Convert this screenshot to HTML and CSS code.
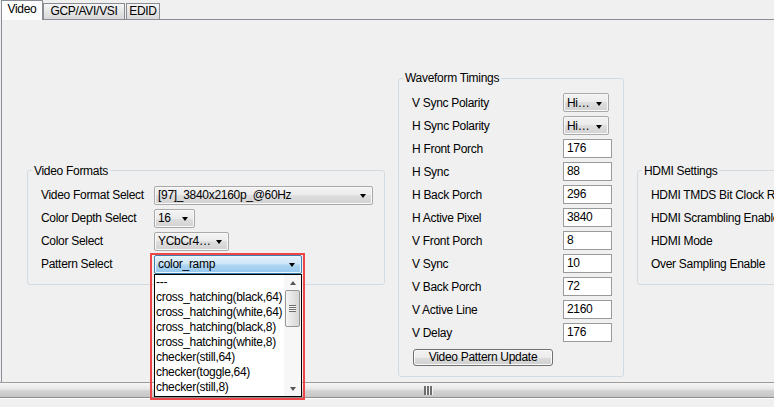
FILE: index.html
```html
<!DOCTYPE html>
<html>
<head>
<meta charset="utf-8">
<link rel="stylesheet" href="styles.css">
</head>
<body>
<div class="tabs">
  <div class="tab tab-video active">Video</div>
  <div class="tab tab-gcp">GCP/AVI/VSI</div>
  <div class="tab tab-edid">EDID</div>
</div>
<div class="panel">
  <div class="groups">
    <fieldset class="group group-formats">
      <legend>Video Formats</legend>
      <div class="row">
        <span class="label label-vf">Video Format Select</span>
        <div class="combo w-format"><span class="combo-text">[97]_3840x2160p_@60Hz</span><span class="arrow"></span></div>
      </div>
      <div class="row">
        <span class="label label-vf">Color Depth Select</span>
        <div class="combo w-depth"><span class="combo-text">16</span><span class="arrow"></span></div>
      </div>
      <div class="row">
        <span class="label label-vf">Color Select</span>
        <div class="combo w-color"><span class="combo-text">YCbCr4…</span><span class="arrow"></span></div>
      </div>
      <div class="row">
        <span class="label label-vf">Pattern Select</span>
        <div class="combo-wrap">
          <div class="combo open w-pattern"><span class="combo-text">color_ramp</span><span class="arrow"></span></div>
          <div class="listbox">
            <ul class="items">
              <li>---</li>
              <li>cross_hatching(black,64)</li>
              <li>cross_hatching(white,64)</li>
              <li>cross_hatching(black,8)</li>
              <li>cross_hatching(white,8)</li>
              <li>checker(still,64)</li>
              <li>checker(toggle,64)</li>
              <li>checker(still,8)</li>
            </ul>
            <div class="vscroll">
              <span class="up"></span>
              <span class="thumb"><span class="grip-v"></span></span>
              <span class="down"></span>
            </div>
          </div>
          <div class="highlight"></div>
        </div>
      </div>
    </fieldset>

    <fieldset class="group group-timings">
      <legend>Waveform Timings</legend>
      <div class="row"><span class="label label-wf">V Sync Polarity</span><div class="combo w-pol"><span class="combo-text">Hi…</span><span class="arrow"></span></div></div>
      <div class="row"><span class="label label-wf">H Sync Polarity</span><div class="combo w-pol"><span class="combo-text">Hi…</span><span class="arrow"></span></div></div>
      <div class="row"><span class="label label-wf">H Front Porch</span><div class="field">176</div></div>
      <div class="row"><span class="label label-wf">H Sync</span><div class="field">88</div></div>
      <div class="row"><span class="label label-wf">H Back Porch</span><div class="field">296</div></div>
      <div class="row"><span class="label label-wf">H Active Pixel</span><div class="field">3840</div></div>
      <div class="row"><span class="label label-wf">V Front Porch</span><div class="field">8</div></div>
      <div class="row"><span class="label label-wf">V Sync</span><div class="field">10</div></div>
      <div class="row"><span class="label label-wf">V Back Porch</span><div class="field">72</div></div>
      <div class="row"><span class="label label-wf">V Active Line</span><div class="field">2160</div></div>
      <div class="row"><span class="label label-wf">V Delay</span><div class="field">176</div></div>
      <div class="button">Video Pattern Update</div>
    </fieldset>

    <fieldset class="group group-hdmi">
      <legend>HDMI Settings</legend>
      <div class="row"><span class="label">HDMI TMDS Bit Clock Ratio</span></div>
      <div class="row"><span class="label">HDMI Scrambling Enable</span></div>
      <div class="row"><span class="label">HDMI Mode</span></div>
      <div class="row"><span class="label">Over Sampling Enable</span></div>
    </fieldset>
  </div>
</div>
<div class="hscroll">
  <svg class="grip-h" width="9" height="9" viewBox="0 0 9 9">
    <rect x="0" y="0" width="2" height="9" fill="#6e6e6e"/>
    <rect x="3" y="0" width="2" height="9" fill="#6e6e6e"/>
    <rect x="6" y="0" width="2" height="9" fill="#6e6e6e"/>
    <rect x="2" y="0" width="1" height="9" fill="#f4f4f4"/>
    <rect x="5" y="0" width="1" height="9" fill="#f4f4f4"/>
    <rect x="8" y="0" width="1" height="9" fill="#f4f4f4"/>
  </svg>
</div>
<div class="footer"></div>
</body>
</html>
```
FILE: styles.css
```css
* { box-sizing: border-box; }

html, body {
  margin: 0;
  padding: 0;
}

body {
  width: 774px;
  height: 407px;
  overflow: hidden;
  background: #f0f0f0;
  font-family: "Liberation Sans", Arial, sans-serif;
  font-size: 12px;
  letter-spacing: -0.3px;
  color: #000;
}

/* ---------- tabs ---------- */
.tabs {
  display: flex;
  align-items: flex-end;
  height: 19px;
  padding-left: 1px;
}

.tab {
  height: 16px;
  line-height: 14px;
  text-align: center;
  border: 1px solid #898c95;
  border-bottom: none;
  background: linear-gradient(#f5f5f5, #e6e6e6 50%, #d9d9d9);
}

.tab.active {
  position: relative;
  z-index: 2;
  height: 20px;
  margin-bottom: -1px;
  line-height: 17px;
  background: #fcfcfc;
}

.tab-video { width: 42px; }
.tab-gcp { width: 82px; }
.tab-edid { width: 34px; margin-left: 1px; }

/* ---------- panel ---------- */
.panel {
  margin-left: 1px;
  height: 363px;
  border-top: 1px solid #898c95;
  border-left: 1px solid #898c95;
}

.groups {
  display: flex;
  align-items: center;
  gap: 13px;
  padding: 51px 0 0 25px;
}

.group {
  flex-shrink: 0;
  margin: 0;
  min-width: 0;
  border: 1px solid #d3dbe2;
  border-radius: 3px;
  padding: 6px 0 8px 13px;
}

.group legend {
  margin-left: -9px;
  padding: 0 2px;
  line-height: 14px;
  height: 14px;
}

.group-formats { width: 358px; }
.group-timings { width: 226px; padding-bottom: 10px; }
.group-hdmi { width: 200px; }

.row {
  display: flex;
  align-items: center;
  height: 23px;
}

.label {
  flex-shrink: 0;
  white-space: nowrap;
}

.label-vf { width: 113px; }
.label-wf { width: 151px; }

/* ---------- combo boxes ---------- */
.combo {
  display: flex;
  align-items: center;
  height: 19px;
  border: 1px solid #a9a9a9;
  border-radius: 2px;
  box-shadow: inset 0 0 0 1px #f8f8f8;
  background: linear-gradient(#f3f3f3, #ebebeb 50%, #dedede 50%, #d2d2d2);
  padding: 0 6px 0 3px;
  white-space: nowrap;
  flex-shrink: 0;
}

.combo-text {
  flex: 1;
  overflow: hidden;
}

.arrow {
  width: 0;
  height: 0;
  border-top: 4px solid #000;
  border-left: 3.5px solid transparent;
  border-right: 3.5px solid transparent;
  margin-top: 2px;
}

.w-format { width: 219px; }
.w-depth { width: 41px; }
.w-color { width: 75px; }
.w-pattern { width: 148px; }
.w-pol { width: 46px; }

.combo.open {
  border-color: #3c7fb1;
  box-shadow: inset 0 0 0 1px #e9f4fc;
  background: linear-gradient(#e6f2fb, #cfe6f8 45%, #aed5f2 55%, #94c7ee);
}

.combo-wrap {
  position: relative;
  z-index: 10;
}

.listbox {
  position: absolute;
  top: 19px;
  left: 0;
  width: 148px;
  height: 123px;
  border: 1px solid #000;
  background: #fff;
  display: flex;
  overflow: hidden;
}

.items {
  list-style: none;
  margin: 0;
  padding: 0 0 0 1px;
  flex: 1;
  overflow: hidden;
}

.items li {
  height: 15px;
  line-height: 15px;
  white-space: nowrap;
}

.vscroll {
  width: 17px;
  flex-shrink: 0;
  display: flex;
  flex-direction: column;
  align-items: center;
  background: #f7f7f7;
  padding: 6px 0 5px;
}

.up, .down {
  width: 0;
  height: 0;
  border-left: 3.5px solid transparent;
  border-right: 3.5px solid transparent;
}

.up { border-bottom: 4px solid #555; }
.down { border-top: 4px solid #555; margin-top: auto; }

.thumb {
  margin-top: 5px;
  width: 15px;
  height: 37px;
  border: 1px solid #979797;
  border-radius: 2px;
  background: linear-gradient(90deg, #f6f6f6, #e4e4e4 50%, #d6d6d6);
  display: flex;
  align-items: center;
  justify-content: center;
}

.grip-v {
  width: 7px;
  height: 7px;
  background: repeating-linear-gradient(#6e6e6e 0 1px, #f4f4f4 1px 2px);
}

.highlight {
  position: absolute;
  top: -2px;
  left: -4px;
  width: 155px;
  height: 147px;
  border: 2px solid #ef4545;
  pointer-events: none;
}

/* ---------- text fields ---------- */
.field {
  width: 49px;
  height: 19px;
  line-height: 17px;
  border: 1px solid #9a9a9a;
  background: #fff;
  padding-left: 3px;
  flex-shrink: 0;
}

.button {
  width: 140px;
  height: 17px;
  line-height: 15px;
  margin: 5px 0 0 1px;
  text-align: center;
  border: 1px solid #707070;
  border-radius: 3px;
  background: linear-gradient(#f3f3f3, #ebebeb 50%, #dddddd 50%, #cfcfcf);
  box-shadow: inset 0 0 0 1px #fafafa;
}

/* ---------- horizontal scrollbar ---------- */
.hscroll {
  height: 16px;
  border-top: 1px solid #9c9c9c;
  border-bottom: 1px solid #8f8f8f;
  background: linear-gradient(#f6f6f6, #e6e6e6 45%, #d3d3d3 55%, #c6c6c6);
  display: flex;
  align-items: center;
  padding-left: 424px;
}

.footer {
  height: 9px;
  border-top: 1px solid #fdfdfd;
  background: #f0f0f0;
}
```
